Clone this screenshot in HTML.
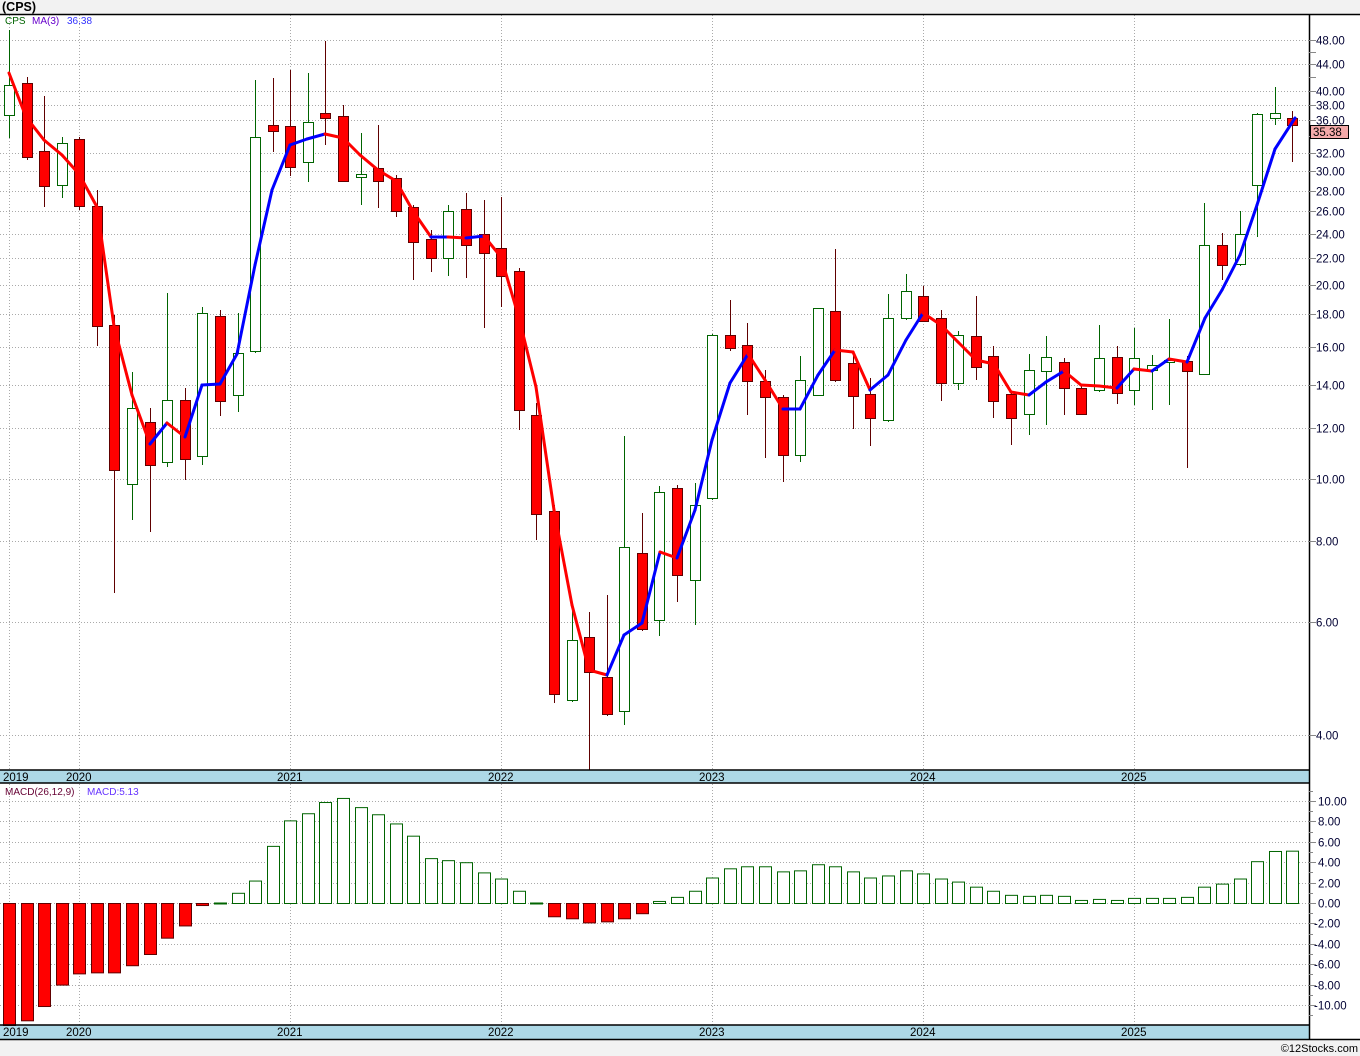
<!DOCTYPE html>
<html><head><meta charset="utf-8"><style>
html,body{margin:0;padding:0;background:#f0f0f0;width:1360px;height:1056px;overflow:hidden;font-family:"Liberation Sans",sans-serif}
svg text{font-family:"Liberation Sans",sans-serif}
</style></head><body>
<svg id="s" width="1360" height="1056" xmlns="http://www.w3.org/2000/svg">
<rect x="0" y="0" width="1360" height="1056" fill="#f2f2f2"/>
<rect x="0" y="14" width="1360" height="1026" fill="#fff"/>
<text x="2" y="11" font-size="12.5" font-weight="bold" fill="#000">(CPS)</text>
<g id="grid" stroke="#aaa" stroke-width="1" stroke-dasharray="1,2"></g>
<rect x="0" y="770" width="1309" height="13" fill="#add8e6"/>
<rect x="0" y="1025" width="1309" height="14" fill="#add8e6"/>
<g id="macd"></g>
<g id="cand"></g>
<g id="ma" stroke-width="3" fill="none" stroke-linecap="round"></g>
<g stroke="#000" stroke-width="1.5">
<line x1="0" y1="14.5" x2="1360" y2="14.5"/>
<line x1="1309.5" y1="14" x2="1309.5" y2="1040"/>
<line x1="0" y1="770" x2="1309" y2="770"/>
<line x1="0" y1="783" x2="1309" y2="783"/>
<line x1="0" y1="1025" x2="1309" y2="1025"/>
<line x1="0" y1="1039.5" x2="1360" y2="1039.5"/>
</g>
<g id="axis" font-size="11.5" fill="#000033"></g>
<g font-size="11.5" fill="#000">
<text x="3" y="781">2019</text><text x="66" y="781">2020</text><text x="277" y="781">2021</text><text x="488" y="781">2022</text><text x="699" y="781">2023</text><text x="910" y="781">2024</text><text x="1121" y="781">2025</text>
<text x="3" y="1036">2019</text><text x="66" y="1036">2020</text><text x="277" y="1036">2021</text><text x="488" y="1036">2022</text><text x="699" y="1036">2023</text><text x="910" y="1036">2024</text><text x="1121" y="1036">2025</text>
</g>
<text x="5" y="24" font-size="10" fill="#006400">CPS</text>
<text x="32" y="24" font-size="10" fill="#6600cc">MA(3)</text>
<text x="67" y="24" font-size="10" fill="#3333ff">36.38</text>
<text x="5" y="795" font-size="10" fill="#660033">MACD(26,12,9)</text>
<text x="87" y="795" font-size="10" fill="#6633ff">MACD:5.13</text>
<rect x="1310.5" y="125.5" width="38" height="13" fill="#f4aaaa" stroke="#000"/>
<text x="1313" y="136" font-size="11.5" fill="#000">35.38</text>
<text x="1358" y="1052" font-size="11" fill="#000" text-anchor="end">©12Stocks.com</text>
</svg>
<script>
const NS="http://www.w3.org/2000/svg";
function el(p,t,a){const e=document.createElementNS(NS,t);for(const k in a)e.setAttribute(k,a[k]);p.appendChild(e);return e;}
const grid=document.getElementById('grid'),axis=document.getElementById('axis');
const py=p=>40+279.7*Math.log(48/p);
[48,46,44,42,40,38,36,34,32,30,28,26,24,22,20,18,16,14,12,10,8,6,4].forEach(p=>{
 const y=Math.round(py(p))+.5;
 const lab=![46,42,34].includes(p);
 if(lab)el(grid,'line',{x1:0,y1:y,x2:1309,y2:y});
 el(axis,'line',{x1:1309,y1:y,x2:1316,y2:y,stroke:'#888'});
 if(lab){const t=el(axis,'text',{x:1316,y:y+4});t.textContent=p.toFixed(2);}
});
const my=v=>903-10.2*v;
for(let v=-11;v<=11;v++){const y=Math.round(my(v))+.5;
 el(axis,'line',{x1:1309,y1:y,x2:v%2?1313:1316,y2:y,stroke:'#888'});
 if(v%2===0&&Math.abs(v)<=10){el(grid,'line',{x1:0,y1:y,x2:1309,y2:y});
 const t=el(axis,'text',{x:v<0?1314:1318,y:y+4});t.textContent=v.toFixed(2);}}
[9,79,290,501,712,923,1134].forEach(x=>{el(grid,'line',{x1:x+.5,y1:15,x2:x+.5,y2:770});el(grid,'line',{x1:x+.5,y1:784,x2:x+.5,y2:1025});});
const C=[[1,85,115,30,138],[0,83,157,77,160],[0,151,186,96,207],[1,143,185,137,198],[0,139,206,137,210],[0,206,326,190,346],[0,325,470,315,593],[1,408,484,372,520],[0,422,465,408,532],[1,400,462,293,467],[0,400,459,388,480],[1,313,456,307,465],[0,316,401,310,416],[1,353,395,313,412],[1,137,351,80,353],[0,125,131,78,152],[0,126,167,70,176],[1,122,162,73,182],[0,113,118,41,145],[0,116,181,105,181],[1,174,177,133,205],[0,168,181,125,208],[0,178,211,175,217],[0,207,242,205,280],[0,239,258,230,272],[1,211,258,205,276],[0,209,245,193,278],[0,234,253,200,328],[0,248,276,197,307],[0,271,410,268,430],[0,415,514,403,540],[0,511,694,505,703],[1,640,700,611,702],[0,637,672,612,770],[0,677,714,595,716],[1,547,711,436,725],[0,553,629,513,631],[1,492,620,486,636],[0,488,575,485,602],[1,505,580,483,625],[1,335,498,334,500],[0,335,348,300,351],[0,345,381,323,415],[0,381,397,370,458],[0,397,455,395,482],[1,380,455,356,462],[1,308,395,308,395],[0,311,380,249,382],[0,363,396,352,429],[0,394,418,378,446],[1,318,420,294,422],[1,291,318,274,320],[0,296,321,286,320],[0,318,383,310,401],[1,335,383,331,390],[0,336,367,296,380],[0,356,401,346,418],[0,394,418,391,445],[1,370,414,354,435],[1,357,371,336,425],[0,362,388,358,415],[0,388,414,385,414],[1,358,390,325,392],[0,357,393,346,404],[1,358,390,328,405],[1,365,370,355,410],[1,360,362,319,405],[0,361,371,356,468],[1,245,374,203,375],[0,245,265,233,280],[1,234,264,211,266],[1,114,185,113,237],[1,113,118,87,125],[0,118,125,111,162]];
const X=i=>Math.round(9+17.58*i);
const cand=document.getElementById('cand');
C.forEach((c,i)=>{const x=X(i)+.5;const col=c[0]?'#006400':'#600000';
 el(cand,'line',{x1:x,y1:c[3],x2:x,y2:c[4],stroke:col});
 el(cand,'rect',{x:x-5,y:c[1]+.5,width:10,height:Math.max(1,c[2]-c[1]),fill:c[0]?'#fff':'#f00',stroke:col});});
const M=[-13,-11.5,-10.1,-8,-6.9,-6.8,-6.8,-6.1,-5,-3.4,-2.2,-0.2,0.05,1,2.2,5.6,8.1,8.8,9.9,10.3,9.4,8.7,7.8,6.6,4.4,4.2,4,3,2.4,1.2,0.05,-1.3,-1.5,-1.9,-1.8,-1.5,-1,0.2,0.6,1.2,2.5,3.4,3.6,3.6,3.1,3.2,3.8,3.6,3.1,2.5,2.7,3.2,2.9,2.4,2.1,1.6,1.2,0.8,0.7,0.8,0.7,0.3,0.4,0.3,0.5,0.5,0.5,0.6,1.6,1.9,2.4,4.1,5.1,5.13];
const mg=document.getElementById('macd');
M.forEach((v,i)=>{const x=X(i);const y0=903,y1=Math.min(1025,my(v));
 el(mg,'rect',{x:x-5.5,y:Math.min(y0,y1)+.5,width:12,height:Math.max(1,Math.abs(y1-y0)),fill:v<0?'#f00':'#fff',stroke:v<0?'#600000':'#006400'});});
const P=[[9,73],[26,117],[44,140],[62,155],[79,174],[97,207],[114,326],[132,395],[150,444],[167,423],[185,437],[202,385],[220,384],[237,354],[255,265],[272,190],[290,145],[307,139],[325,134],[343,138],[360,155],[378,170],[396,181],[413,211],[431,237],[448,237],[466,238],[484,236],[501,257],[519,318],[536,387],[554,510],[572,605],[589,670],[607,675],[624,635],[642,623],[660,552],[677,558],[695,510],[712,440],[730,383],[748,354],[765,380],[783,409],[800,409],[818,375],[835,350],[853,352],[870,390],[888,375],[906,340],[923,313],[941,325],[958,342],[976,360],[994,364],[1011,392],[1029,395],[1046,382],[1064,371],[1081,385],[1099,386],[1117,388],[1134,369],[1152,371],[1169,359],[1187,362],[1205,318],[1222,290],[1240,255],[1257,205],[1275,149],[1295,118]];
const ma=document.getElementById('ma');
for(let i=1;i<P.length;i++){const a=P[i-1],b=P[i];
 el(ma,'line',{x1:a[0],y1:a[1],x2:b[0],y2:b[1],stroke:b[1]>a[1]?'#ff0000':'#0000ff'});}
</script>
</body></html>
